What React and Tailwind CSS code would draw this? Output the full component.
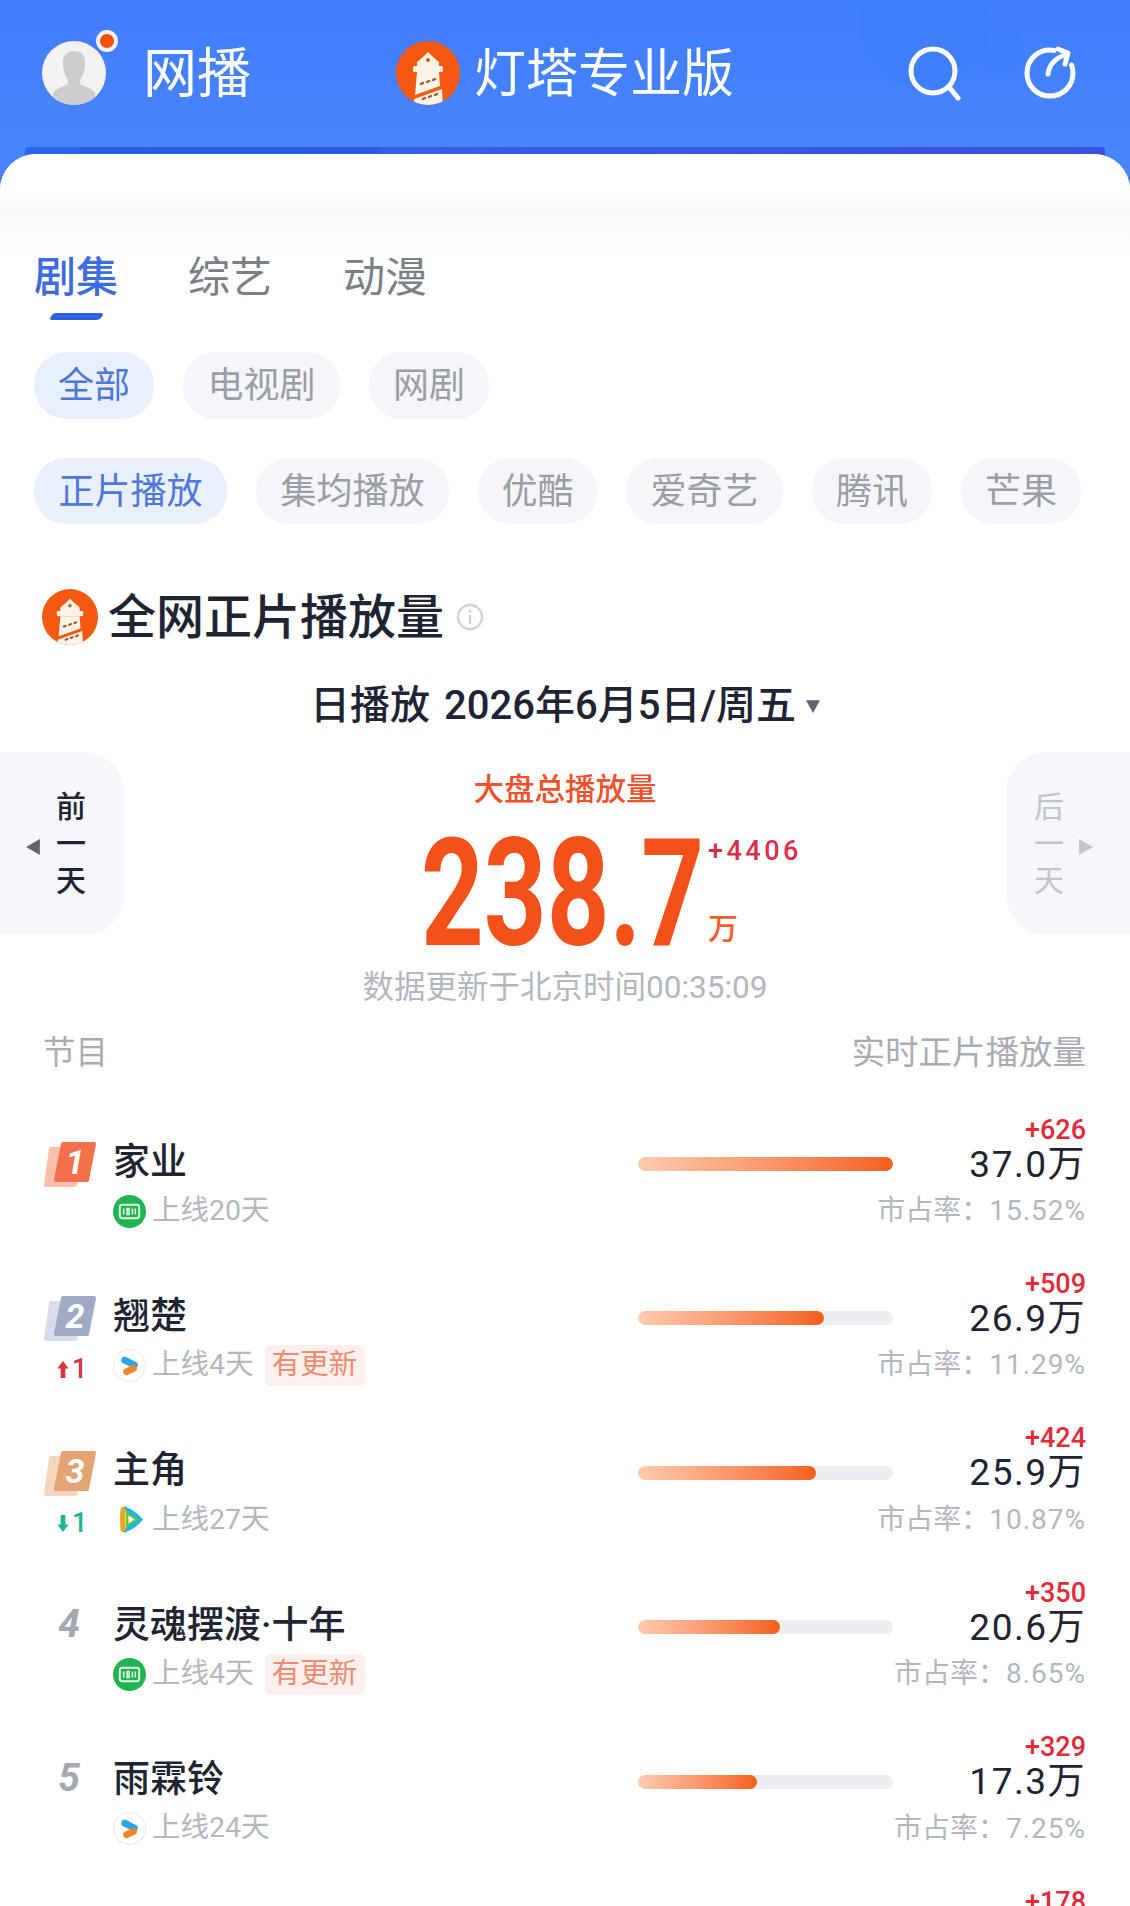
import React from 'react';

const rows = [
  { rank: 1, title: '家业', platform: 'iqiyi', days: '上线20天', width: 'w-full', delta: '+626', value: '37.0', share: '15.52%' },
  { rank: 2, title: '翘楚', platform: 'youku', days: '上线4天', fresh: true, move: 'up', width: 'w-[186px]', delta: '+509', value: '26.9', share: '11.29%' },
  { rank: 3, title: '主角', platform: 'tencent', days: '上线27天', move: 'down', width: 'w-[178px]', delta: '+424', value: '25.9', share: '10.87%' },
  { rank: 4, title: '灵魂摆渡·十年', platform: 'iqiyi', days: '上线4天', fresh: true, width: 'w-[142px]', delta: '+350', value: '20.6', share: '8.65%' },
  { rank: 5, title: '雨霖铃', platform: 'youku', days: '上线24天', width: 'w-[119px]', delta: '+329', value: '17.3', share: '7.25%' },
];

function Lighthouse({ className }) {
  return (
    <svg viewBox="0 0 64 64" className={className}>
      <defs>
        <clipPath id="lh-clip"><circle cx="32" cy="32" r="32" /></clipPath>
      </defs>
      <circle cx="32" cy="32" r="32" fill="#f4590f" />
      <g clipPath="url(#lh-clip)">
        <path d="M32 11l5 5 6 5v4H21v-4l6-5z" fill="#fdf3e6" />
        <circle cx="32" cy="19" r="2" fill="#b5622f" />
        <rect x="17" y="25" width="30" height="6" rx="1.5" fill="#fdf3e6" />
        <path d="M21 31h22l1 14-25 9zM18 58l28-10 1 20H18z" fill="#fdf3e6" />
        <path d="M25 43l2-1M31 41l2-1M37 39l2-1M27 58l2-1M33 56l2-1M39 54l2-1" stroke="#a4552b" strokeWidth="2.4" strokeLinecap="round" />
      </g>
    </svg>
  );
}

function PlatformIcon({ type }) {
  if (type === 'iqiyi') {
    return (
      <svg viewBox="0 0 34 34" className="w-[33px] h-[33px] shrink-0">
        <circle cx="17" cy="17" r="17" fill="#1fb44f" />
        <rect x="7" y="10" width="20" height="14" rx="2.5" fill="none" stroke="#e8f8ec" strokeWidth="2" />
        <path d="M11 14v6M14.5 14v6h2v-6zM20 14v6M23 14v6" stroke="#e8f8ec" strokeWidth="1.6" fill="none" />
      </svg>
    );
  }
  if (type === 'youku') {
    return (
      <svg viewBox="0 0 34 34" className="w-[33px] h-[33px] shrink-0">
        <circle cx="17" cy="17" r="16.4" fill="#fff" stroke="#eceef1" strokeWidth="1.2" />
        <path d="M12 11.500l10 5" stroke="#2aa6e6" strokeWidth="7" strokeLinecap="round" />
        <path d="M21 20l-7 3.500" stroke="#f2842a" strokeWidth="7" strokeLinecap="round" />
      </svg>
    );
  }
  return (
    <svg viewBox="0 0 34 34" className="w-[33px] h-[33px] shrink-0">
      <path d="M8 5c-1 8-1 16 0 24l6 2c-2-9-2-19 0-28z" fill="#e6a81e" />
      <path d="M10 3c10 3 16 8 21 14-5 6-11 11-21 14 6-1 6-27 0-28z" fill="#20b8d8" />
      <path d="M13 9l13 8-13 8z" fill="#6fc92f" />
      <path d="M16 13l6 4-6 4z" fill="#fff" />
    </svg>
  );
}

function RankBadge({ rank }) {
  if (rank > 3) {
    return <div className="w-[54px] h-[48px] flex items-center justify-center pr-[4px] mt-[-3px] text-[39px] font-bold italic text-[#a3a7af] leading-none">{rank}</div>;
  }
  const back = { 1: 'fill-[#fbc0a9] stroke-[#fbc0a9]', 2: 'fill-[#d9dde9] stroke-[#d9dde9]', 3: 'fill-[#f3d6be] stroke-[#f3d6be]' }[rank];
  const front = { 1: 'fill-[#f4704a] stroke-[#f4704a]', 2: 'fill-[#a0aac6] stroke-[#a0aac6]', 3: 'fill-[#e2a473] stroke-[#e2a473]' }[rank];
  return (
    <div className="relative w-[54px] h-[48px] ml-[-1px]">
      <svg viewBox="0 0 54 48" className="w-[54px] h-[48px]" strokeWidth="4" strokeLinejoin="round">
        <path d="M8 9h30l-6 36H3z" className={back} />
        <path d="M20 4h31l-7 36H13z" className={front} />
      </svg>
      <span className="absolute left-[15px] top-[0px] w-[34px] h-[44px] flex items-center justify-center text-white text-[34px] font-bold italic leading-none">{rank}</span>
    </div>
  );
}

function Move({ dir }) {
  const up = dir === 'up';
  return (
    <div className={`mt-[12px] pl-[13px] h-[30px] flex items-center text-[27px] font-medium leading-none ${up ? 'text-[#d8343c]' : 'text-[#1fb58f]'}`}>
      <svg viewBox="0 0 12 18" className={`w-[12px] h-[17px] mr-[3px] fill-current ${up ? '' : 'rotate-180'}`}>
        <path d="M6 0l6 8H8.500v10h-5V8H0z" />
      </svg>
      1
    </div>
  );
}

function Row({ row }) {
  return (
    <div className="flex h-[154.4px]">
      <div className="w-[69px] pt-[32px]">
        <RankBadge rank={row.rank} />
        {row.move && <Move dir={row.move} />}
      </div>
      <div className="flex-1 pt-[34px]">
        <div className="h-[40px] flex items-center text-[37px] font-medium text-[#1f2433] leading-none whitespace-nowrap">{row.title}</div>
        <div className="mt-[8px] h-[42px] flex items-center">
          <PlatformIcon type={row.platform} />
          <span className="ml-[6px] text-[28.5px] text-[#b3b7bf] leading-none">{row.days}</span>
          {row.fresh && <span className="ml-[11px] w-[100px] h-[41px] rounded-[6px] bg-[#fdf0ec] text-[#ee8b6f] text-[28.5px] flex items-center justify-center leading-none">有更新</span>}
        </div>
      </div>
      <div className="w-[255px] pt-[49px]">
        <div className="h-[14px] rounded-full bg-[#eceef1] overflow-hidden">
          <div className={`h-full rounded-full bg-gradient-to-r from-[#fccbae] to-[#f45f17] ${row.width}`} />
        </div>
      </div>
      <div className="w-[193px] pt-[6px] flex flex-col items-end whitespace-nowrap">
        <div className="h-[32px] flex items-center text-[27px] font-medium text-[#e02b3a] leading-none">{row.delta}</div>
        <div className="h-[36px] flex items-center text-[37px] font-normal text-[#1f2433] leading-none tracking-[1.5px]">{row.value}万</div>
        <div className="mt-[11px] h-[36px] flex items-center leading-none text-[#b3b7bf]">
          <span className="text-[28px]">市占率：</span>
          <span className="text-[28px] tracking-[1px]">{row.share}</span>
        </div>
      </div>
    </div>
  );
}

export default function App() {
  return (
    <div className="w-[1130px] h-[1906px] overflow-hidden bg-[#fefefe] font-['Roboto','Noto_Sans_CJK_SC',sans-serif]">
      <header className="relative h-[190px] overflow-hidden bg-gradient-to-b from-[#3f7dff] to-[#4a86f8]">
        <div className="absolute left-[860px] top-[-40px] w-[130px] h-[130px] rounded-full bg-[#3c7cf8] opacity-40" />
        <div className="absolute left-[975px] top-[25px] w-[50px] h-[50px] rounded-full bg-[#3c7cf8] opacity-40" />
        <div className="relative flex items-center h-[146px] pl-[42px]">
          <div className="relative w-[64px] h-[64px] mt-[-1px] shrink-0">
            <div className="w-[64px] h-[64px] rounded-full bg-[#f3f2f1] overflow-hidden">
              <svg viewBox="0 0 64 64" className="w-[64px] h-[64px]">
                <path d="M32 10c8 0 12 6 11 15-1 7-3 11-5 14v4c5 3 12 4 15 9v12H11V52c3-5 10-6 15-9v-4c-2-3-4-7-5-14-1-9 3-15 11-15z" fill="#cdcdcd" />
              </svg>
            </div>
            <span className="absolute left-[54px] top-[-11px] w-[22px] h-[22px] rounded-full bg-[#f4500f] border-[4px] border-[#f7efec]" />
          </div>
          <div className="w-[37px] shrink-0" />
          <span className="w-[253px] mt-[4px] text-[54px] text-white font-normal leading-none">网播</span>
          <Lighthouse className="w-[64px] h-[64px] shrink-0" />
          <span className="ml-[14px] mt-[4px] w-[259px] text-[52px] text-white font-normal leading-none whitespace-nowrap">灯塔专业版</span>
          <svg viewBox="0 0 56 56" className="ml-[174px] w-[56px] h-[56px] shrink-0" fill="none" stroke="#fff" strokeWidth="5" strokeLinecap="round">
            <circle cx="26" cy="26" r="22" />
            <path d="M42 42l9 11" />
          </svg>
          <svg viewBox="0 0 56 56" className="ml-[59px] w-[56px] h-[56px] shrink-0" fill="none" stroke="#fff" strokeWidth="5" strokeLinecap="round" strokeLinejoin="round">
            <path d="M32 5.500C18 3 5 13 5 28c0 13 10 23 23 23s23-10 23-23c0-3-.5-6-1.500-8" />
            <path d="M26 29c1-9 7-16 19-20" />
            <path d="M36 4l10 4-3 11" />
          </svg>
        </div>
        <div className="absolute left-[25px] top-[147px] w-[1080px] h-[9px] rounded-t-[4px] bg-gradient-to-r from-[#2a66f0] to-[#3a4fe0]" />
        <div className="absolute left-[80px] top-[147px] w-[300px] h-[9px] bg-[#2457e8] opacity-60" />
      </header>

      <main className="relative mt-[-36px] rounded-t-[36px] bg-white">
        <div className="h-[98px] bg-gradient-to-b from-white from-40% via-[#fafafb] via-55% to-[#fefefe] rounded-t-[36px]" />
        <section className="px-[34px]">
          <div className="flex h-[50px] pt-[2px] items-center text-[42px] leading-none text-[#7b8087]">
            <span className="text-[#3d6be0] font-medium">剧集</span>
            <span className="ml-[70px]">综艺</span>
            <span className="ml-[71px]">动漫</span>
          </div>
          <div className="mt-[11px] ml-[17px] w-[51px] h-[7px] rounded-[3px] bg-[#2f62e0] -skew-x-[30deg]" />

          <div className="mt-[32px] flex gap-[29px] text-[36px] leading-none">
            <span className="w-[120px] h-[67px] rounded-[32px] bg-[#e9effb] text-[#4c78dc] flex items-center justify-center">全部</span>
            <span className="w-[157px] h-[67px] rounded-[32px] bg-[#f5f6f9] text-[#9a9ea6] flex items-center justify-center">电视剧</span>
            <span className="w-[120px] h-[67px] rounded-[32px] bg-[#f5f6f9] text-[#9a9ea6] flex items-center justify-center">网剧</span>
          </div>

          <div className="mt-[39px] flex gap-[29px] text-[36px] leading-none">
            <span className="w-[193px] h-[66px] pt-[2px] rounded-[32px] bg-[#e9effb] text-[#4c78dc] flex items-center justify-center">正片播放</span>
            <span className="w-[193px] h-[66px] pt-[2px] rounded-[32px] bg-[#f5f6f9] text-[#9a9ea6] flex items-center justify-center">集均播放</span>
            <span className="w-[119px] h-[66px] pt-[2px] rounded-[32px] bg-[#f5f6f9] text-[#9a9ea6] flex items-center justify-center">优酷</span>
            <span className="w-[157px] h-[66px] pt-[2px] rounded-[32px] bg-[#f5f6f9] text-[#9a9ea6] flex items-center justify-center">爱奇艺</span>
            <span className="w-[120px] h-[66px] pt-[2px] rounded-[32px] bg-[#f5f6f9] text-[#9a9ea6] flex items-center justify-center">腾讯</span>
            <span className="w-[120px] h-[66px] pt-[2px] rounded-[32px] bg-[#f5f6f9] text-[#9a9ea6] flex items-center justify-center">芒果</span>
          </div>
        </section>

        <section className="mt-[65px] pl-[42px] h-[56px] flex items-center">
          <Lighthouse className="w-[56px] h-[56px] shrink-0" />
          <h2 className="ml-[10px] pt-[2px] text-[48px] font-medium text-[#1f2433] leading-none whitespace-nowrap">全网正片播放量</h2>
          <svg viewBox="0 0 28 28" className="ml-[12px] w-[28px] h-[28px]" fill="none" stroke="#ced2d9" strokeWidth="2.400">
            <circle cx="14" cy="14" r="12" />
            <path d="M14 12v9M14 7v2.500" />
          </svg>
        </section>

        <div className="mt-[36px] h-[50px] flex items-center justify-center text-[#1f2433] text-[40px] font-medium leading-none whitespace-nowrap">
          <span>日播放</span>
          <span className="ml-[14px]">2026年6月5日/周五</span>
          <svg viewBox="0 0 12 12" className="ml-[10px] w-[14px] h-[14px] fill-[#5f6570]"><path d="M0 1h12L6 12z" /></svg>
        </div>

        <section className="mt-[21px] flex h-[256px]">
          <div className="w-[124px] h-[183px] rounded-r-[40px] bg-[#f5f7fa] flex items-center shrink-0">
            <svg viewBox="0 0 12 14" className="ml-[26px] mt-[6px] w-[14px] h-[16px] fill-[#5f6570]"><path d="M0 7l12-7v14z" /></svg>
            <div className="ml-[16px] flex flex-col gap-[7px] text-[30px] font-medium text-[#1f2433] leading-none"><span>前</span><span>一</span><span>天</span></div>
          </div>
          <div className="flex-1 flex flex-col items-center pt-[18px]">
            <div className="h-[40px] flex items-center text-[30.500px] font-medium text-[#f2502a] leading-none">大盘总播放量</div>
            <div className="h-[157px] flex pl-[91px]">
              <div className="w-[284px] h-[157px] pt-[6px] text-[150px] leading-[157px] font-bold text-[#f4501a] whitespace-nowrap">
                <span className="block w-[376px] origin-left scale-x-[0.73]">238.7</span>
              </div>
              <div className="w-[95px] pl-[3px] pt-[28px]">
                <div className="text-[27px] font-medium text-[#d9304a] leading-none tracking-[3.5px]">+4406</div>
                <div className="mt-[49px] text-[30px] font-medium text-[#f2602a] leading-none">万</div>
              </div>
            </div>
            <div className="h-[40px] pt-[2px] flex items-center text-[31.500px] text-[#b3b7bf] leading-none whitespace-nowrap">数据更新于北京时间00:35:09</div>
          </div>
          <div className="w-[124px] h-[183px] rounded-l-[40px] bg-[#f5f7fa] flex items-center shrink-0">
            <div className="ml-[28px] flex flex-col gap-[7px] text-[30px] text-[#c1c5cc] leading-none"><span>后</span><span>一</span><span>天</span></div>
            <svg viewBox="0 0 12 14" className="ml-[15px] mt-[6px] w-[14px] h-[16px] fill-[#c1c5cc]"><path d="M12 7L0 0v14z" /></svg>
          </div>
        </section>

        <section className="mt-[24px] px-[44px]">
          <div className="h-[40px] pt-[2px] flex items-center justify-between text-[#a8adb5] leading-none">
            <span className="text-[32.500px] ml-[-1px]">节目</span>
            <span className="text-[33.500px] whitespace-nowrap">实时正片播放量</span>
          </div>
          <div className="mt-[36px]">
            {rows.map((row) => <Row key={row.rank} row={row} />)}
            <div className="flex justify-end pt-[6px] h-[40px] text-[27px] font-medium text-[#e02b3a] leading-[32px]">+178</div>
          </div>
        </section>
      </main>
    </div>
  );
}
